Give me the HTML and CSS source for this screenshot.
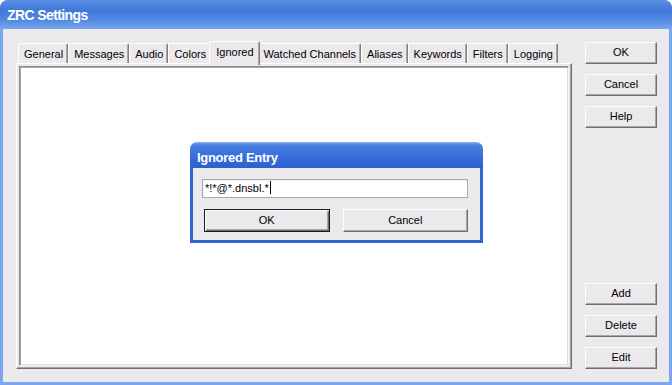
FILE: index.html
```html
<!DOCTYPE html>
<html lang="en">
<head>
    <meta charset="UTF-8">
    <title>ZRC Settings</title>
    <link rel="stylesheet" href="styles.css">
</head>
<body>

    <div class="ventana">
        <div class="titulo">ZRC Settings</div>

        <div class="cliente">
            <div class="zona-tabs">
                <div class="tabs">
                    <div class="tab">General</div>
                    <div class="tab">Messages</div>
                    <div class="tab">Audio</div>
                    <div class="tab">Colors</div>
                    <div class="tab activa">Ignored</div>
                    <div class="tab">Watched Channels</div>
                    <div class="tab">Aliases</div>
                    <div class="tab">Keywords</div>
                    <div class="tab">Filters</div>
                    <div class="tab">Logging</div>
                </div>
                <div class="panel">
                    <div class="lista"></div>
                </div>
            </div>

            <div class="lateral">
                <div class="grupo">
                    <div class="boton">OK</div>
                    <div class="boton">Cancel</div>
                    <div class="boton">Help</div>
                </div>
                <div class="grupo">
                    <div class="boton">Add</div>
                    <div class="boton">Delete</div>
                    <div class="boton">Edit</div>
                </div>
            </div>
        </div>

        <!-- dialogo modal encima -->
        <div class="dialogo">
            <div class="dialogo-titulo">Ignored Entry</div>
            <div class="dialogo-cuerpo">
                <div class="entrada">*!*@*.dnsbl.*<span class="cursor"></span></div>
                <div class="dialogo-botones">
                    <div class="boton defecto">OK</div>
                    <div class="boton">Cancel</div>
                </div>
            </div>
        </div>
    </div>

</body>
</html>
```

FILE: styles.css
```css
body {
    margin: 0;
    font-family: "Liberation Sans", Arial, sans-serif;
    font-size: 11px;
    color: black;
}

.ventana {
    position: relative;
    width: 672px;
    height: 385px;
    box-sizing: border-box;
    padding: 0 3px 3px;
    background: #7aa7ef;
    border-radius: 8px 8px 0 0;
    display: flex;
    flex-direction: column;
}

.titulo {
    flex: none;
    height: 29px;
    margin: 0 -3px;
    padding-left: 7px;
    line-height: 31px;
    color: white;
    font-weight: bold;
    font-size: 14px;
    letter-spacing: -0.6px;
    border-radius: 8px 8px 0 0;
    background: linear-gradient(#5a8de3 0%, #4078db 35%, #5289e2 70%, #79a7ee 100%);
}

.cliente {
    flex: 1;
    display: flex;
    gap: 13px;
    padding: 12px 12px 13px 13px;
    background: #ebe9ec;
}

.zona-tabs {
    flex: 1;
    display: flex;
    flex-direction: column;
}

.tabs {
    display: flex;
    align-items: flex-start;
    height: 22px;
    padding-left: 2px;
}

.tab {
    height: 20px;
    margin-top: 2px;
    padding: 0 4px 0 5px;
    line-height: 20px;
    box-sizing: border-box;
    border-top: 1px solid #fff;
    border-left: 1px solid #fff;
    border-right: 1px solid #7f7f7f;
    box-shadow: inset -1px 0 #a9a9a9;
    border-radius: 2px 2px 0 0;
    background: #ebe9ec;
}

.tab.activa {
    position: relative;
    z-index: 1;
    height: 24px;
    margin: 0 -2px;
    padding: 0 5px 0 6px;
    line-height: 21px;
}

.panel {
    flex: 1;
    display: flex;
    padding: 2px;
    border-top: 1px solid #fff;
    border-left: 1px solid #fff;
    border-right: 1px solid #6f6f6f;
    border-bottom: 1px solid #6f6f6f;
    box-shadow: inset -1px -1px #a5a5a5;
}

.lista {
    flex: 1;
    background: white;
    border: 1px solid;
    border-color: #8a8a8a #f5f5f5 #f5f5f5 #8a8a8a;
    box-shadow: inset 1px 1px #a6a6a6, inset -1px -1px #dcdcdc;
}

.lateral {
    width: 72px;
    margin-top: 1px;
    display: flex;
    flex-direction: column;
    justify-content: space-between;
}

.grupo {
    display: flex;
    flex-direction: column;
    gap: 10px;
}

.boton {
    height: 22px;
    box-sizing: border-box;
    line-height: 19px;
    text-align: center;
    background: #ebe9ec;
    border: 1px solid;
    border-color: #fdfdfd #6f6f6f #6f6f6f #fdfdfd;
    box-shadow: inset -1px -1px #a6a6a6;
}

.dialogo {
    position: absolute;
    left: 190px;
    top: 142px;
    width: 293px;
    display: flex;
    flex-direction: column;
}

.dialogo-titulo {
    height: 26px;
    padding-left: 7px;
    line-height: 31px;
    color: white;
    font-weight: bold;
    font-size: 13px;
    letter-spacing: -0.3px;
    border-radius: 7px 7px 0 0;
    background: linear-gradient(#88b0f2 0, #4a80e2 3px, #3a71dc 45%, #2b60cf 100%);
}

.dialogo-cuerpo {
    background: #ebe9ec;
    border: 3px solid #3066d4;
    border-top: none;
    padding: 11px 12px 8px 9px;
}

.entrada {
    height: 19px;
    box-sizing: border-box;
    padding-left: 2px;
    line-height: 17px;
    background: white;
    border: 1px solid #a9a9a9;
    box-shadow: inset 1px 1px #f0f0f0;
}

.cursor {
    display: inline-block;
    width: 1px;
    height: 13px;
    margin-left: 1px;
    vertical-align: -2px;
    background: black;
}

.dialogo-botones {
    display: flex;
    gap: 13px;
    margin-top: 11px;
    padding-left: 2px;
}

.dialogo-botones .boton {
    flex: 1;
    height: 23px;
    line-height: 20px;
}

.boton.defecto {
    border: 1px solid #1a1a1a;
    box-shadow: inset 1px 1px #fdfdfd, inset -1px -1px #6f6f6f, inset -2px -2px #a6a6a6;
}
```
